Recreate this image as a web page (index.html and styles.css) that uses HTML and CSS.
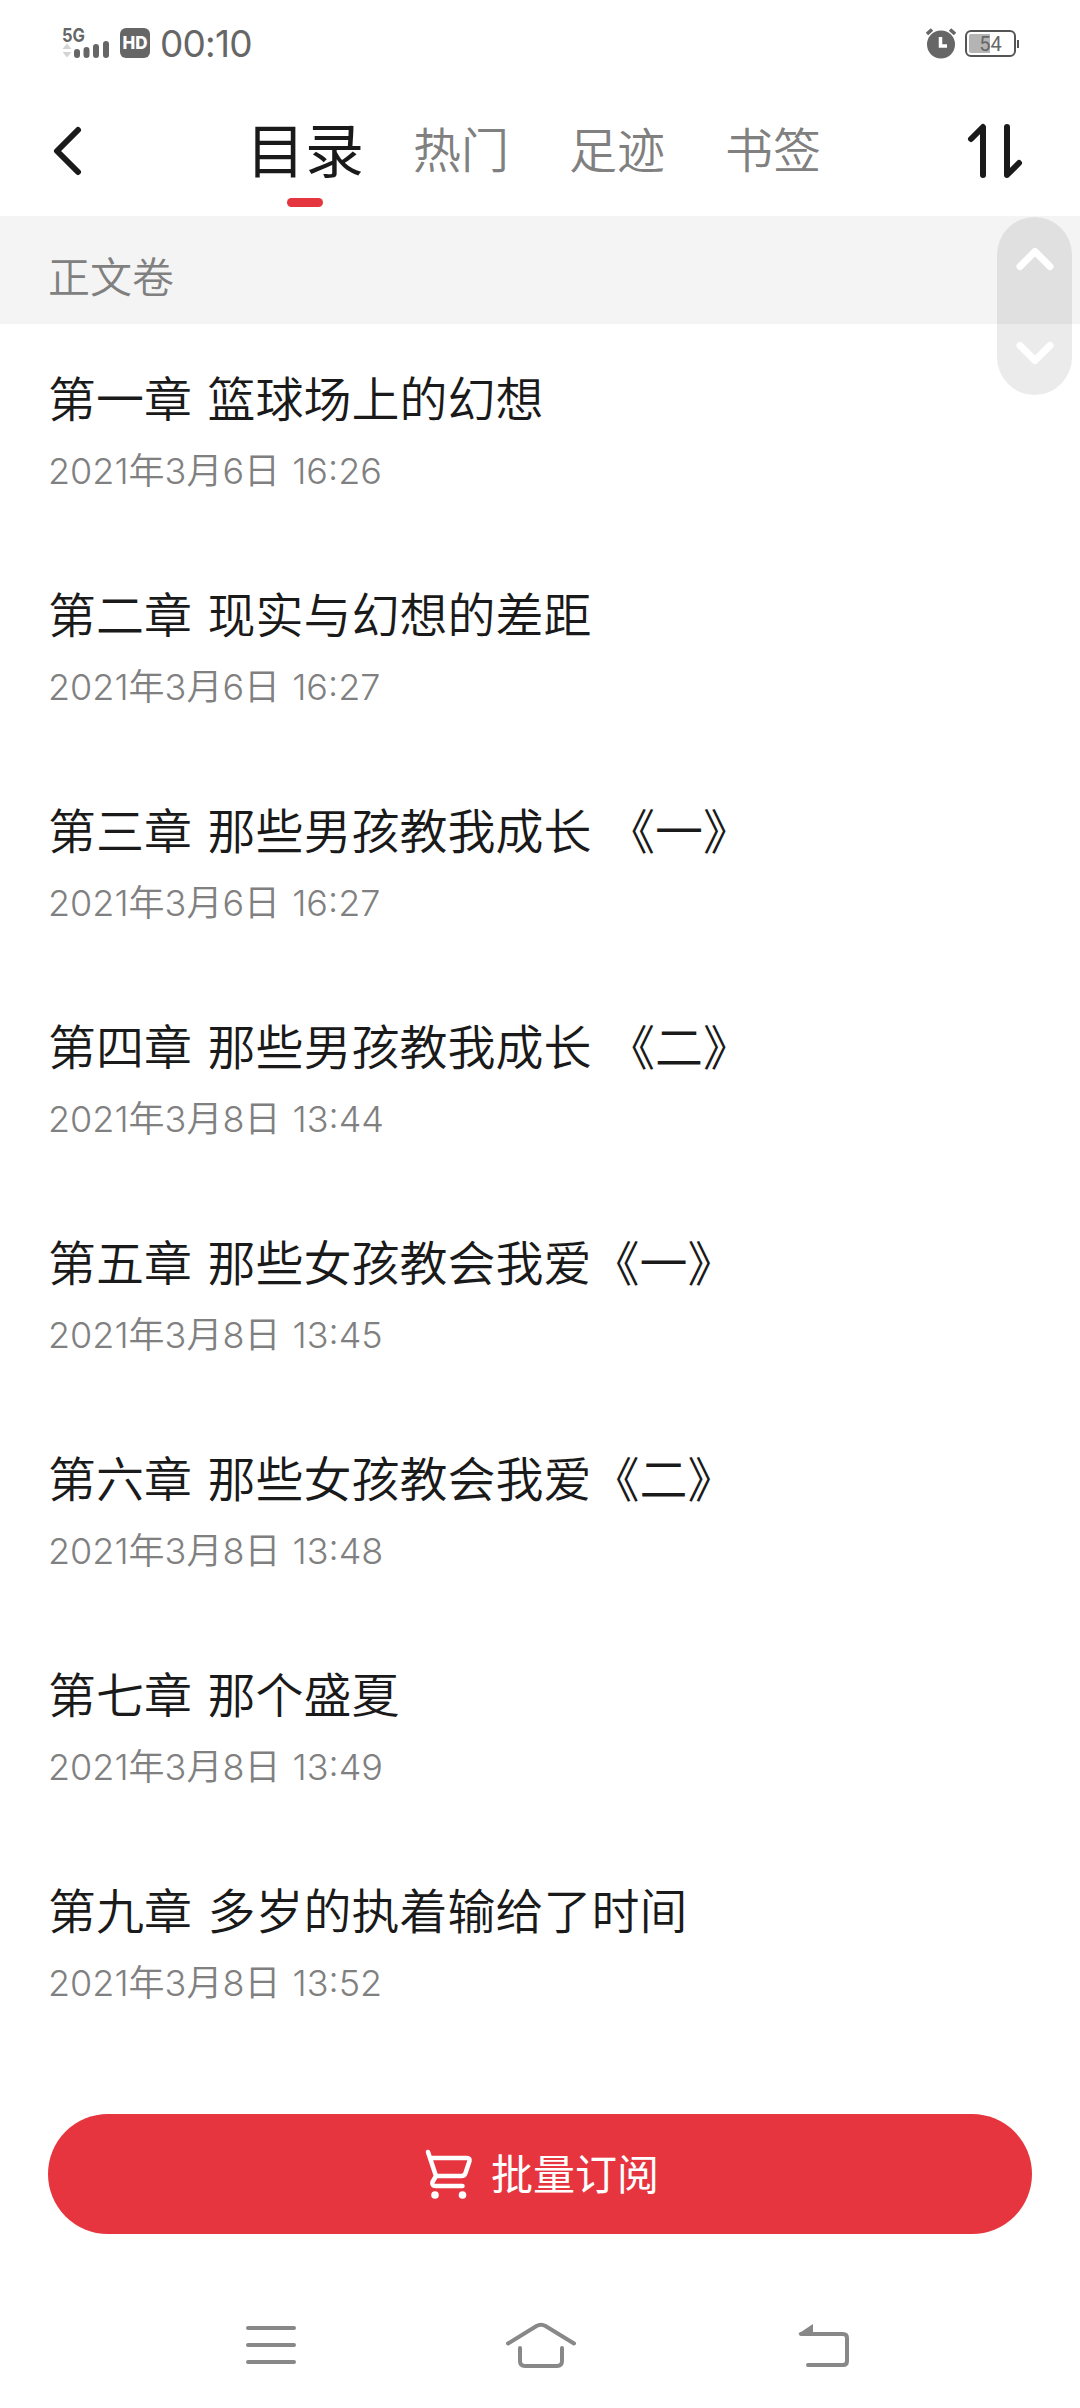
FILE: index.html
```html
<!DOCTYPE html>
<html lang="zh-CN">
<head>
    <meta charset="UTF-8">
    <meta name="viewport" content="width=device-width, initial-scale=1.0">
    <title>目录</title>
    <link rel="stylesheet" href="styles.css">
</head>
<body>

<div class="status-bar">
    <div class="status-left">
        <svg class="signal" width="50" height="32" viewBox="0 0 50 32">
            <text class="signal-label" x="0" y="15" textLength="23" lengthAdjust="spacingAndGlyphs">5G</text>
            <path d="M0.5 22l4.5-5.5 4.5 5.5zM0.5 25h9l-4.5 5.5z" fill="#d4d4d4"/>
            <path d="M15 28v-3M24.5 28v-5M34 28v-8M44 28v-11" stroke="#666" stroke-width="6" stroke-linecap="round"/>
        </svg>
        <span class="hd">HD</span>
        <span class="clock">00:10</span>
    </div>
    <div class="status-right">
        <svg width="30" height="32" viewBox="0 0 30 32">
            <circle cx="15" cy="17.5" r="14" fill="#666"/>
            <path d="M1 7l5-4.500M29 7l-5-4.500" stroke="#666" stroke-width="3.500"/>
            <path d="M14.500 10v9h6.500" fill="none" stroke="#fff" stroke-width="3.500"/>
        </svg>
        <div class="battery"><span>54</span></div>
    </div>
</div>

<div class="header">
    <svg class="back" width="30" height="54" viewBox="0 0 30 54">
        <path d="M25 6L4 27l21 21"/>
    </svg>
    <div class="tabs">
        <div class="tab active">目录</div>
        <div class="tab">热门</div>
        <div class="tab">足迹</div>
        <div class="tab">书签</div>
    </div>
    <svg class="sort" width="56" height="60" viewBox="0 0 56 60">
        <path d="M4 18L16 6v48M40 6v48l12-12"/>
    </svg>
</div>

<div class="volume">正文卷</div>

<div class="scroller">
    <svg width="38" height="24" viewBox="0 0 38 24"><path d="M4 19.500L19 4.500l15 15"/></svg>
    <svg width="38" height="24" viewBox="0 0 38 24"><path d="M4 4.500l15 15 15-15"/></svg>
</div>

<div class="chapters">
    <div class="chapter">
        <div class="title">第一章 篮球场上的幻想</div>
        <div class="date">2021年3月6日 16:26</div>
    </div>
    <div class="chapter">
        <div class="title">第二章 现实与幻想的差距</div>
        <div class="date">2021年3月6日 16:27</div>
    </div>
    <div class="chapter">
        <div class="title">第三章 那些男孩教我成长 《一》</div>
        <div class="date">2021年3月6日 16:27</div>
    </div>
    <div class="chapter">
        <div class="title">第四章 那些男孩教我成长 《二》</div>
        <div class="date">2021年3月8日 13:44</div>
    </div>
    <div class="chapter">
        <div class="title">第五章 那些女孩教会我爱《一》</div>
        <div class="date">2021年3月8日 13:45</div>
    </div>
    <div class="chapter">
        <div class="title">第六章 那些女孩教会我爱《二》</div>
        <div class="date">2021年3月8日 13:48</div>
    </div>
    <div class="chapter">
        <div class="title">第七章 那个盛夏</div>
        <div class="date">2021年3月8日 13:49</div>
    </div>
    <div class="chapter">
        <div class="title">第九章 多岁的执着输给了时间</div>
        <div class="date">2021年3月8日 13:52</div>
    </div>
</div>

<button class="subscribe">
    <svg width="48" height="50" viewBox="0 0 48 50">
        <path d="M3 3l8 24M6 9h36q3 0 2.500 3l-4 12q-1 3-4 3H11l-3.500 6q-1 4 3 4h27" fill="none" stroke="#fff" stroke-width="4.500" stroke-linecap="round" stroke-linejoin="round"/>
        <circle cx="10" cy="46" r="3.800" fill="#fff"/>
        <circle cx="37.500" cy="46" r="3.800" fill="#fff"/>
    </svg>
    <span>批量订阅</span>
</button>

<div class="nav-bar">
    <svg width="50" height="40" viewBox="0 0 50 40">
        <path d="M2 3h46M2 20h46M2 37h46"/>
    </svg>
    <svg class="home" width="70" height="46" viewBox="0 0 70 46">
        <path d="M2 21.500L30.500 4q4.500-2.500 9 0L68 21.500M14 26v13q0 5 5 5h32q5 0 5-5V26"/>
    </svg>
    <svg width="52" height="44" viewBox="0 0 52 44">
        <path d="M3 11h42q4 0 4 4v23q0 4-4 4H10"/>
        <path class="arrow" d="M0 11L15 1v11z"/>
    </svg>
</div>

</body>
</html>
```
FILE: styles.css
```css
body {
    margin: 0;
    width: 1080px;
    height: 2408px;
    display: flex;
    flex-direction: column;
    overflow: hidden;
    background-color: #fff;
    color: #1a1a1a;
    font-family: Inter, "Noto Sans CJK SC", sans-serif;
    font-weight: 350;
}
svg {
    display: block;
    flex: none;
}
.status-bar {
    height: 86px;
    box-sizing: border-box;
    padding: 0 61px 0 62px;
    display: flex;
    justify-content: space-between;
    align-items: center;
    color: #666;
}
.status-left, .status-right {
    display: flex;
    align-items: center;
}
.signal {
    overflow: visible;
}
.signal-label {
    font-size: 19px;
    font-weight: 700;
    fill: #666;
}
.hd {
    width: 30px;
    height: 30px;
    line-height: 30px;
    margin: 0 10px 0 8px;
    border-radius: 6px;
    background-color: #666;
    color: #fff;
    font-size: 17px;
    font-weight: 800;
    text-align: center;
}
.clock {
    font-size: 37px;
    font-weight: 400;
    letter-spacing: -0.8px;
}
.status-right {
    gap: 9px;
}
.battery {
    position: relative;
    box-sizing: border-box;
    width: 51px;
    height: 27px;
    margin-right: 3px;
    padding: 2px;
    border: 2px solid #555;
    border-radius: 6px;
    background: linear-gradient(to right, #b4b4b4 50%, #fff 50%) content-box;
    font-family: Roboto, sans-serif;
    font-size: 20px;
    font-weight: 400;
    line-height: 20px;
    text-align: center;
}
.battery::after {
    content: "";
    position: absolute;
    right: -5px;
    top: 8px;
    width: 2px;
    height: 8px;
    background-color: #555;
}
.header {
    height: 130px;
    box-sizing: border-box;
    padding: 0 57px 0 53px;
    display: flex;
    align-items: center;
}
.back, .sort {
    fill: none;
    stroke: #1a1a1a;
    stroke-width: 6;
    stroke-linecap: round;
    stroke-linejoin: round;
}
.tabs {
    display: flex;
    gap: 60px;
    margin-left: 174px;
}
.tab {
    width: 96px;
    height: 130px;
    box-sizing: border-box;
    padding-bottom: 8px;
    display: flex;
    justify-content: center;
    align-items: center;
    white-space: nowrap;
    font-size: 48px;
    color: #808080;
}
.tab.active {
    position: relative;
    font-size: 59px;
    font-weight: 400;
    color: #1a1a1a;
}
.tab.active::after {
    content: "";
    position: absolute;
    left: 30px;
    bottom: 9px;
    width: 36px;
    height: 9px;
    border-radius: 5px;
    background-color: #e5353e;
}
.sort {
    margin-left: auto;
}
.volume {
    height: 108px;
    line-height: 124px;
    padding-left: 48px;
    background-color: #f4f4f4;
    color: #808080;
    font-size: 42px;
}
.scroller {
    position: absolute;
    left: 997px;
    top: 217px;
    width: 75px;
    height: 178px;
    box-sizing: border-box;
    padding: 30px 0;
    border-radius: 38px;
    background-color: rgba(0, 0, 0, 0.08);
    display: flex;
    flex-direction: column;
    justify-content: space-between;
    align-items: center;
}
.scroller path {
    fill: none;
    stroke: #fff;
    stroke-width: 7;
    stroke-linecap: round;
    stroke-linejoin: round;
}
.chapters {
    padding: 0 48px;
}
.chapter {
    height: 216px;
    box-sizing: border-box;
    padding-top: 40px;
}
.title {
    font-size: 48px;
    line-height: 72px;
    word-spacing: 2px;
    white-space: nowrap;
}
.date {
    margin-top: 8px;
    font-size: 36px;
    line-height: 54px;
    word-spacing: 2px;
    color: #808080;
}
.subscribe {
    height: 120px;
    margin: 62px 48px 0;
    padding: 0 0 0 4px;
    border: none;
    border-radius: 60px;
    background-color: #e6353f;
    color: #fff;
    font-family: "Noto Sans CJK SC", sans-serif;
    font-size: 42px;
    font-weight: 400;
    display: flex;
    justify-content: center;
    align-items: center;
    gap: 18px;
}
.subscribe span {
    padding-bottom: 6px;
}
.nav-bar {
    flex: 1;
    padding: 48px 230px 0 246px;
    display: flex;
    justify-content: space-between;
    align-items: center;
}
.nav-bar path {
    fill: none;
    stroke: #888;
    stroke-width: 4;
    stroke-linecap: round;
}
.nav-bar .home {
    margin-right: 12px;
}
.nav-bar .arrow {
    fill: #888;
    stroke: none;
}
```
